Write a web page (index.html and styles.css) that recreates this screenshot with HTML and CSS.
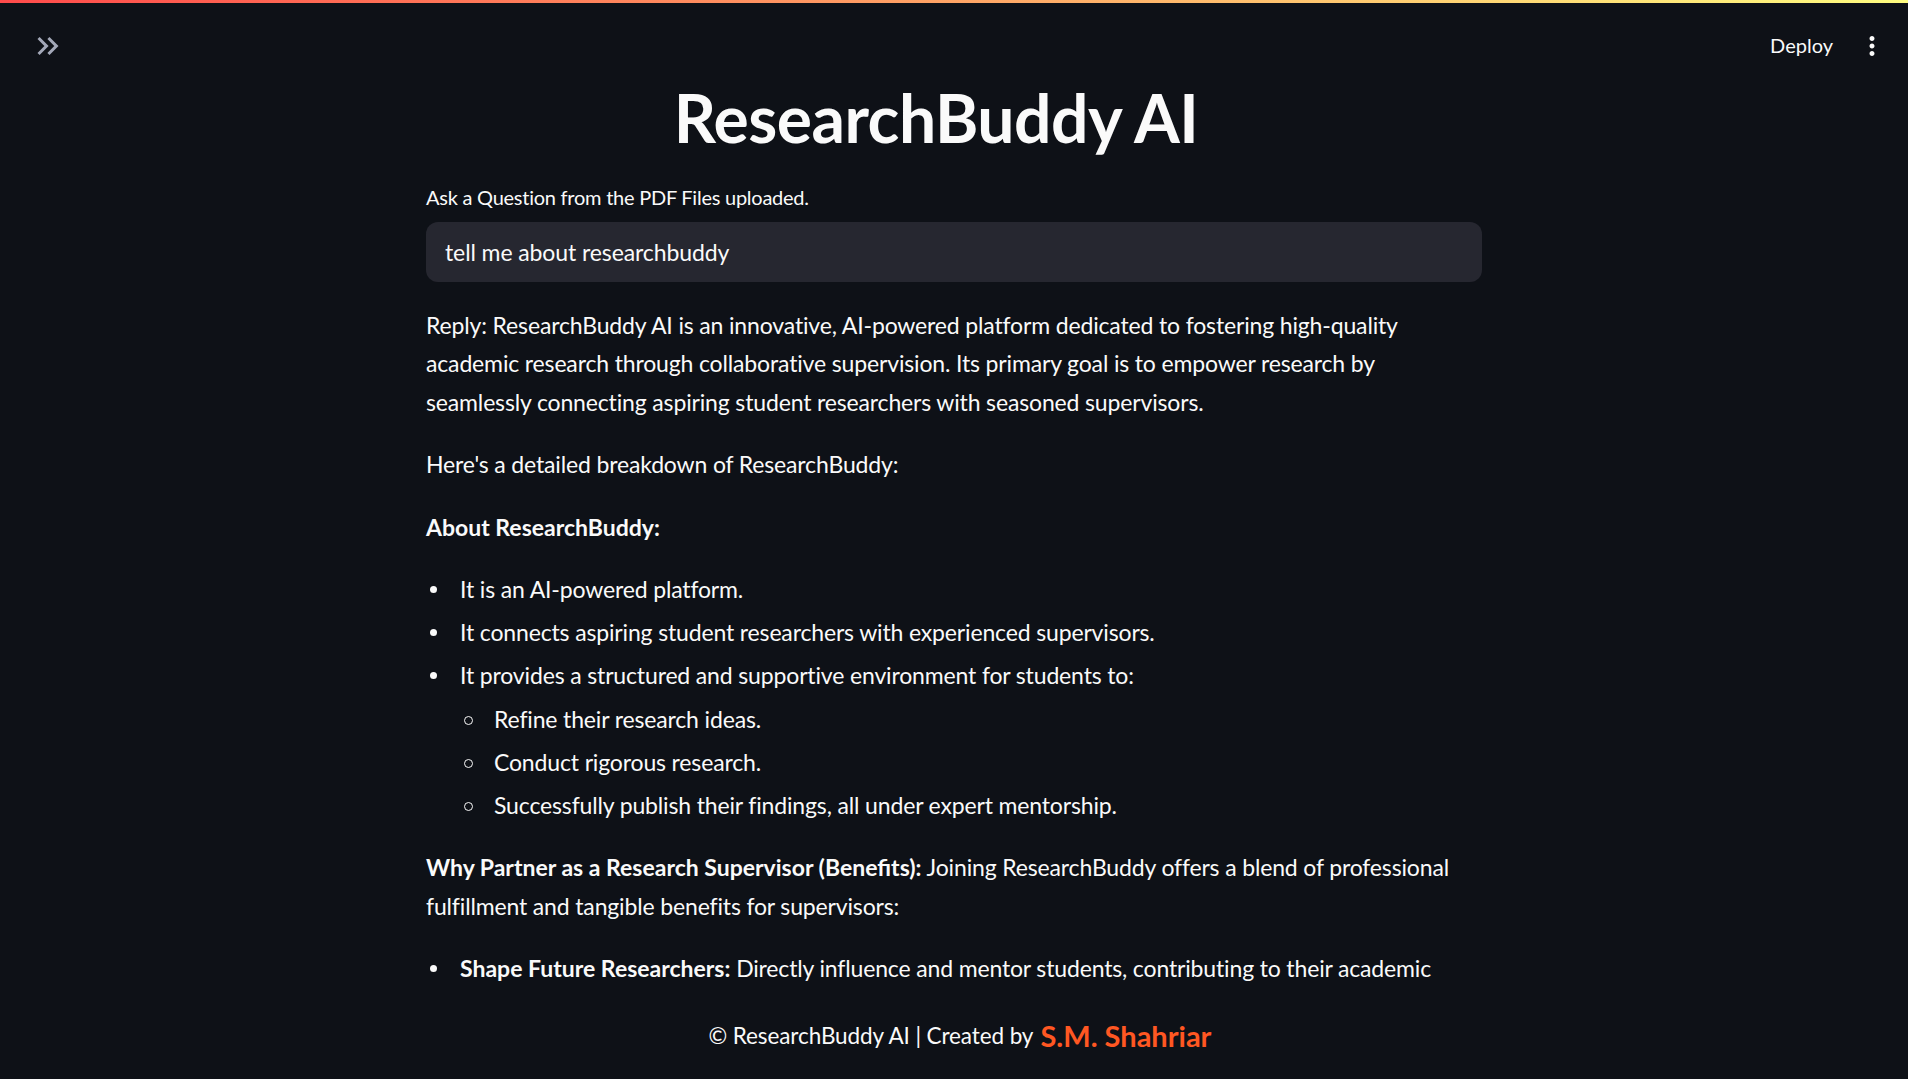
FILE: index.html
```html
<!DOCTYPE html>
<html lang="en">
<head>
<meta charset="utf-8">
<title>ResearchBuddy AI</title>
<link rel="stylesheet" href="styles.css">
</head>
<body>
<div class="decoration"></div>
<header class="topbar">
  <button class="icon-btn sidebar-toggle" aria-label="Open sidebar">
    <svg viewBox="0 0 24 24" width="36" height="36"><path fill="currentColor" d="M6.41 6L5 7.41 9.58 12 5 16.59 6.41 18l6-6z M13 6l-1.41 1.41L16.17 12l-4.58 4.59L13 18l6-6z"/></svg>
  </button>
  <div class="actions">
    <button class="deploy">Deploy</button>
    <button class="icon-btn menu" aria-label="Main menu">
      <svg viewBox="0 0 24 24" width="30" height="30"><path fill="currentColor" d="M12 8c1.1 0 2-.9 2-2s-.9-2-2-2-2 .9-2 2 .9 2 2 2zm0 2c-1.1 0-2 .9-2 2s.9 2 2 2 2-.9 2-2-.9-2-2-2zm0 6c-1.1 0-2 .9-2 2s.9 2 2 2 2-.9 2-2-.9-2-2-2z"/></svg>
    </button>
  </div>
</header>
<main class="main">
  <div class="block">
    <h1 class="title">ResearchBuddy AI</h1>
    <label class="field-label" for="q">Ask a Question from the PDF Files uploaded.</label>
    <div class="input-wrap">
      <input id="q" class="text-input" type="text" value="tell me about researchbuddy">
    </div>
    <div class="reply">
      <p>Reply: ResearchBuddy AI is an innovative, AI-powered platform dedicated to fostering high-quality academic research through collaborative supervision. Its primary goal is to empower research by seamlessly connecting aspiring student researchers with seasoned supervisors.</p>
      <p>Here's a detailed breakdown of ResearchBuddy:</p>
      <p><strong>About ResearchBuddy:</strong></p>
      <ul>
        <li>It is an AI-powered platform.</li>
        <li>It connects aspiring student researchers with experienced supervisors.</li>
        <li><span class="item-text">It provides a structured and supportive environment for students to:</span><ul class="sub">
            <li>Refine their research ideas.</li>
            <li>Conduct rigorous research.</li>
            <li>Successfully publish their findings, all under expert mentorship.</li>
          </ul></li>
      </ul>
      <p><strong>Why Partner as a Research Supervisor (Benefits):</strong> Joining ResearchBuddy offers a blend of professional fulfillment and tangible benefits for supervisors:</p>
      <ul>
        <li><strong>Shape Future Researchers:</strong> Directly influence and mentor students, contributing to their academic</li>
      </ul>
    </div>
  </div>
</main>
<footer class="footer">
  <span>© ResearchBuddy AI | Created by </span><span class="author">S.M. Shahriar</span>
</footer>
</body>
</html>
```

FILE: styles.css
```css
* { box-sizing: border-box; }
html, body {
  margin: 0;
  height: 100%;
}
body {
  background: #0e1117;
  color: #fafafa;
  font-family: "Lato", "Noto Sans", sans-serif;
  overflow: hidden;
  display: flex;
  flex-direction: column;
}
.decoration {
  flex: none;
  height: 3px;
  background: linear-gradient(90deg, rgb(255, 75, 75), rgb(255, 253, 128));
}
.topbar {
  flex: none;
  height: 75px;
  display: flex;
  align-items: flex-start;
  justify-content: space-between;
  padding: 25px 21px 0 30px;
}
.icon-btn {
  background: none;
  border: none;
  padding: 0;
  margin: 0;
  display: flex;
  color: #a3a8b8;
}
.menu { color: #fafafa; }
.actions {
  display: flex;
  align-items: center;
  gap: 24px;
  height: 36px;
}
.deploy {
  background: none;
  border: none;
  color: #fafafa;
  font-family: inherit;
  font-size: 20px;
  padding: 0;
  margin-top: -3px;
}
.main {
  flex: 1;
  min-height: 0;
  overflow: hidden;
}
.block {
  width: 1056px;
  margin: 0 auto;
}
.title {
  margin: 0;
  padding-right: 36px;
  text-align: center;
  font-size: 66px;
  line-height: 80px;
  font-weight: 700;
  letter-spacing: -0.5px;
}
.field-label {
  display: block;
  font-size: 20px;
  letter-spacing: -0.25px;
  line-height: 34px;
  margin-top: 22px;
  margin-bottom: 8px;
}
.input-wrap {
  height: 60px;
  background: #262730;
  border-radius: 12px;
  display: flex;
  align-items: center;
}
.text-input {
  width: 100%;
  background: transparent;
  border: none;
  outline: none;
  color: #fafafa;
  font-family: inherit;
  font-size: 23px;
  letter-spacing: -0.1px;
  padding: 0 19px;
}
.reply {
  margin-top: 24px;
  font-size: 23px;
  letter-spacing: -0.15px;
  line-height: 38.4px;
}
.reply p {
  margin: 0 0 24px;
}
.reply ul {
  margin: 0 0 24px;
  padding-left: 34px;
  list-style: none;
}
.item-text {
  display: block;
}
.reply .sub {
  margin: 4.8px 0 0;
}
.reply li {
  position: relative;
}
.reply li::before {
  content: "";
  position: absolute;
  left: -30px;
  top: 16px;
  width: 7px;
  height: 7px;
  border-radius: 50%;
  background: #fafafa;
}
.reply .sub li::before {
  background: transparent;
  border: 1.5px solid #fafafa;
}
.reply li + li {
  margin-top: 4.8px;
}
.reply strong { font-weight: 700; letter-spacing: 0; }
.footer {
  flex: none;
  height: 80px;
  display: flex;
  align-items: center;
  justify-content: center;
  padding: 0 0 8px 12px;
  font-size: 22.5px;
  letter-spacing: -0.1px;
  color: #fafafa;
  white-space: pre;
}
.author {
  color: #ff5722;
  font-weight: 700;
  font-size: 29px;
  letter-spacing: 0;
  margin-left: 2px;
}
```
